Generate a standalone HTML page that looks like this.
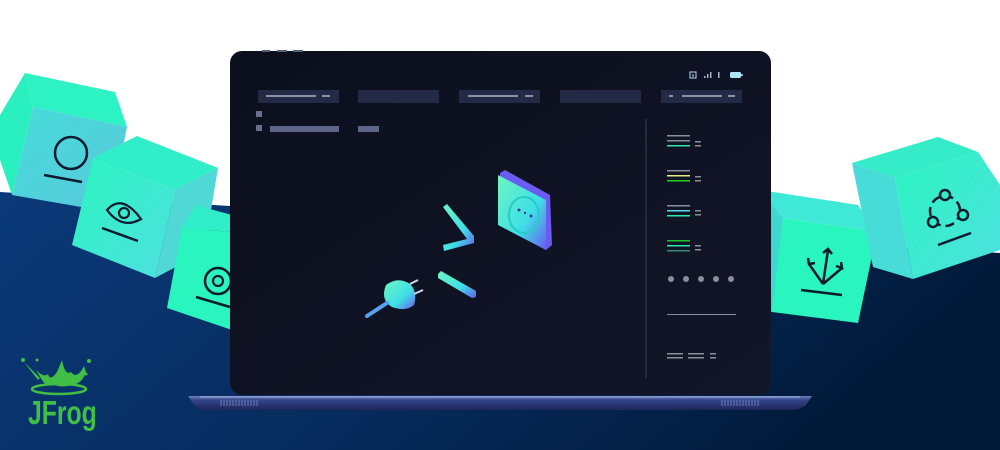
<!DOCTYPE html>
<html><head><meta charset="utf-8"><style>
html,body{margin:0;padding:0;width:1000px;height:450px;overflow:hidden;background:#fff}
svg{display:block}
</style></head><body>
<svg width="1000" height="450" viewBox="0 0 1000 450" xmlns="http://www.w3.org/2000/svg">
<defs>
<linearGradient id="bg" x1="0" y1="0" x2="1" y2="0.3">
<stop offset="0" stop-color="#0b3a7a"/><stop offset="0.6" stop-color="#062a5a"/><stop offset="1" stop-color="#011a3a"/></linearGradient>
<linearGradient id="cg" x1="0" y1="0" x2="1" y2="1"><stop offset="0" stop-color="#2bf5c0"/><stop offset="1" stop-color="#4ee0e0"/></linearGradient>
<linearGradient id="cs" x1="0" y1="0" x2="1" y2="1"><stop offset="0" stop-color="#45dcd8"/><stop offset="1" stop-color="#5ac8dc"/></linearGradient>
<linearGradient id="scr" x1="0" y1="0" x2="1" y2="1"><stop offset="0" stop-color="#0c0f1c"/><stop offset="1" stop-color="#121628"/></linearGradient>
<linearGradient id="ill" x1="0" y1="0" x2="1" y2="1"><stop offset="0" stop-color="#6ef5c0"/><stop offset="0.6" stop-color="#3ee0e6"/><stop offset="1" stop-color="#6a5cf0"/></linearGradient>
<linearGradient id="base" x1="0" y1="0" x2="0" y2="1"><stop offset="0" stop-color="#6d7fc0"/><stop offset="0.3" stop-color="#34448a"/><stop offset="1" stop-color="#1c2658"/></linearGradient>
</defs>
<rect width="1000" height="450" fill="#fff"/>
<polygon points="0,192 1000,253 1000,450 0,450" fill="url(#bg)"/>

<!-- cube 1 -->
<polygon points="25,73 115,92 127,127 33,107" fill="#2cf2c4"/>
<polygon points="25,73 33,107 12,195 0,160 0,115" fill="#2af0c0"/>
<polygon points="33,107 127,127 110,212 12,195" fill="url(#cs)"/>
<circle cx="71" cy="153" r="16" fill="none" stroke="#0d1b2e" stroke-width="2.5"/>
<line x1="44" y1="175" x2="82" y2="182" stroke="#0d1b2e" stroke-width="2.5"/>
<!-- cube 2 -->
<polygon points="137,136 218,168 175,190 93,158" fill="#30efc8"/>
<polygon points="175,190 218,168 204,252 155,278" fill="#50d8d6"/>
<polygon points="93,158 175,190 155,278 72,245" fill="url(#cg)"/>
<path d="M107,210 Q122,193 141,219 Q122,230 107,210 Z" fill="none" stroke="#0d1b2e" stroke-width="2.2"/>
<circle cx="124" cy="213" r="5" fill="none" stroke="#0d1b2e" stroke-width="2.2"/>
<line x1="102" y1="228" x2="138" y2="241" stroke="#0d1b2e" stroke-width="2.5"/>
<!-- cube 3 -->
<polygon points="195,205 232,215 232,232 182,228" fill="#30efc8"/>
<polygon points="182,228 232,232 232,330 167,308" fill="#2bf5bf"/>
<circle cx="218" cy="281" r="13" fill="none" stroke="#0d1b2e" stroke-width="2.5"/>
<circle cx="218" cy="281" r="5" fill="none" stroke="#0d1b2e" stroke-width="2.2"/>
<line x1="196" y1="297" x2="230" y2="307" stroke="#0d1b2e" stroke-width="2.5"/>
<!-- cube 4 -->
<polygon points="760,190 858,205 877,232 783,218" fill="#40e8d8"/>
<polygon points="760,190 783,218 773,312 760,310" fill="#3ed8d0"/>
<polygon points="783,218 877,232 858,323 772,312" fill="#2bf5bf"/>
<g stroke="#0d1b2e" stroke-width="2.5" fill="none">
<line x1="823" y1="284" x2="828" y2="250"/><line x1="823" y1="284" x2="809" y2="264"/><line x1="823" y1="284" x2="842" y2="268"/>
<path d="M823,253 L828,249 L832,254 M808,258 L809,264 L815,263 M836,266 L842,268 L841,262"/>
<line x1="801" y1="290" x2="842" y2="295"/></g>
<!-- cube 5 -->
<polygon points="852,163 938,137 978,152 895,178" fill="#34edc8"/>
<polygon points="852,163 895,178 913,279 873,267" fill="#48dcd8"/>
<polygon points="895,178 978,152 1000,185 1000,250 913,279" fill="url(#cg)"/>
<g stroke="#0d1b2e" stroke-width="2.5" fill="none">
<circle cx="945" cy="211" r="15" stroke-dasharray="9 5"/>
<circle cx="945" cy="195" r="5" fill="#30efc8"/><circle cx="963" cy="215" r="5" fill="#30efc8"/><circle cx="933" cy="222" r="5" fill="#30efc8"/>
<line x1="938" y1="245" x2="971" y2="233"/></g>

<!-- JFrog -->
<g fill="#40be46">
<path d="M36,370 Q44,378 48,374 Q50,382 57,372 L62,360 Q65,376 71,372 Q77,380 84,366 L86,372 Q82,384 72,385 Q62,388 55,385 Q46,387 42,380 Z"/>
<path d="M24,362 L40,378 L38,380 Z"/>
<circle cx="23" cy="360" r="2"/><circle cx="37" cy="360" r="1.5"/><circle cx="89" cy="361" r="2"/><circle cx="86" cy="374" r="1.5"/>
<ellipse cx="59" cy="389" rx="27" ry="5" fill="none" stroke="#40be46" stroke-width="2.5"/>
</g>
<text transform="translate(28,424) scale(0.75,1)" font-family="Liberation Sans, sans-serif" font-size="33" font-weight="bold" fill="#40be46">JFrog</text>

<!-- laptop base -->
<path d="M188,396 L812,396 L806,405 Q800,410 790,410 L210,410 Q198,410 194,405 Z" fill="url(#base)"/>
<line x1="200" y1="397" x2="800" y2="397" stroke="#9fb0d8" stroke-width="1"/>
<g stroke="#8090c8" stroke-width="0.8">
<path d="M221,400v6M224,400v6M227,400v6M230,400v6M233,400v6M236,400v6M239,400v6M242,400v6M245,400v6M248,400v6M251,400v6M254,400v6M257,400v6"/>
<path d="M722,400v6M725,400v6M728,400v6M731,400v6M734,400v6M737,400v6M740,400v6M743,400v6M746,400v6M749,400v6M752,400v6M755,400v6M758,400v6"/></g>
<!-- screen -->
<rect x="230" y="51" width="541" height="344" rx="12" fill="url(#scr)"/>
<g fill="#55607a"><rect x="262" y="50" width="8" height="2"/><rect x="277" y="50" width="10" height="2"/><rect x="293" y="50" width="10" height="2"/></g>
<!-- status -->
<g fill="none" stroke="#9fb8d0" stroke-width="1.2">
<rect x="690" y="72" width="6" height="6"/><path d="M693,74 v3"/></g>
<g fill="#9fb8d0"><rect x="704" y="76" width="1.5" height="2"/><rect x="707" y="74" width="1.5" height="4"/><rect x="710" y="72" width="1.5" height="6"/>
<rect x="718" y="72" width="1.5" height="6"/><rect x="730" y="72" width="11" height="6" rx="1.5" fill="#aee6f5"/><rect x="741" y="74" width="2" height="2"/></g>
<!-- tabs -->
<g fill="#232a45"><rect x="258" y="90" width="81" height="13"/><rect x="358" y="90" width="81" height="13"/><rect x="459" y="90" width="81" height="13"/><rect x="560" y="90" width="81" height="13"/><rect x="661" y="90" width="81" height="13"/></g>
<g fill="#8a91a8"><rect x="266" y="95" width="50" height="2"/><rect x="322" y="95" width="8" height="2"/><rect x="468" y="95" width="50" height="2"/><rect x="525" y="95" width="8" height="2"/><rect x="682" y="95" width="40" height="2"/><rect x="728" y="95" width="7" height="2"/><rect x="669" y="95" width="4" height="2"/></g>
<g fill="#6a7190"><rect x="256" y="111" width="6" height="6"/><rect x="256" y="125" width="6" height="6"/></g>
<g fill="#5d6588"><rect x="270" y="126" width="69" height="6"/><rect x="358" y="126" width="21" height="6"/></g>
<!-- right panel -->
<rect x="645" y="119" width="2" height="260" fill="#222940"/>
<g fill="#8a8f9a">
<rect x="667" y="135" width="23" height="1.5"/><rect x="667" y="140" width="23" height="1.5"/><rect x="695" y="141" width="6" height="1.5"/><rect x="695" y="145" width="6" height="1.5"/>
<rect x="667" y="170" width="23" height="1.5"/><rect x="695" y="176" width="6" height="1.5"/><rect x="695" y="180" width="6" height="1.5"/>
<rect x="667" y="205" width="23" height="1.5"/><rect x="695" y="210" width="6" height="1.5"/><rect x="695" y="214" width="6" height="1.5"/>
<rect x="695" y="245" width="6" height="1.5"/><rect x="695" y="249" width="6" height="1.5"/>
<circle cx="671" cy="279" r="3"/><circle cx="686" cy="279" r="3"/><circle cx="701" cy="279" r="3"/><circle cx="716" cy="279" r="3"/><circle cx="731" cy="279" r="3"/>
<rect x="667" y="314" width="69" height="1"/>
<rect x="667" y="353" width="16" height="1.5"/><rect x="667" y="357" width="16" height="1.5"/><rect x="688" y="353" width="16" height="1.5"/><rect x="688" y="357" width="16" height="1.5"/><rect x="710" y="353" width="6" height="1.5"/><rect x="710" y="357" width="6" height="1.5"/>
</g>
<rect x="667" y="145" width="23" height="1.5" fill="#2ee8a8"/>
<rect x="667" y="175" width="23" height="1.5" fill="#e8f08a"/><rect x="667" y="180" width="23" height="1.5" fill="#20d020"/>
<rect x="667" y="210" width="23" height="1.5" fill="#5ed8e8"/><rect x="667" y="215" width="23" height="1.5" fill="#2ee8a8"/>
<rect x="667" y="240" width="23" height="1.5" fill="#20c030"/><rect x="667" y="245" width="23" height="1.5" fill="#2ee8a8"/><rect x="667" y="250" width="23" height="1.5" fill="#3a8a70"/>

<!-- illustration -->
<polygon points="500,173 505,170 550,195 552,245 546,250 500,225" fill="#6a5cf0"/>
<polygon points="498,175 546,200 546,250 498,225" fill="url(#ill)"/>
<ellipse cx="524" cy="215" rx="15" ry="18" fill="none" stroke="#2cc8c8" stroke-width="2"/>
<circle cx="519" cy="210" r="1.5" fill="#3a3a90"/><circle cx="525" cy="213" r="1.2" fill="#3a3a90"/><circle cx="531" cy="216" r="1.5" fill="#3a3a90"/>
<polygon points="443,207 447,204 474,236 474,243 444,251 443,245 467,239" fill="url(#ill)"/>
<polygon points="438,274 441,271 476,291 476,297 472,298 438,278" fill="url(#ill)"/>
<g>
<path d="M386,285 Q398,276 410,284 Q418,292 414,305 Q405,312 392,307 Q380,300 386,285 Z" fill="url(#ill)"/>
<line x1="410" y1="284" x2="418" y2="280" stroke="#c8d8f0" stroke-width="2"/><line x1="414" y1="294" x2="423" y2="290" stroke="#c8d8f0" stroke-width="2"/>
<line x1="387" y1="303" x2="367" y2="316" stroke="#5aa0f0" stroke-width="4" stroke-linecap="round"/>
</g>
</svg>
</body></html>
